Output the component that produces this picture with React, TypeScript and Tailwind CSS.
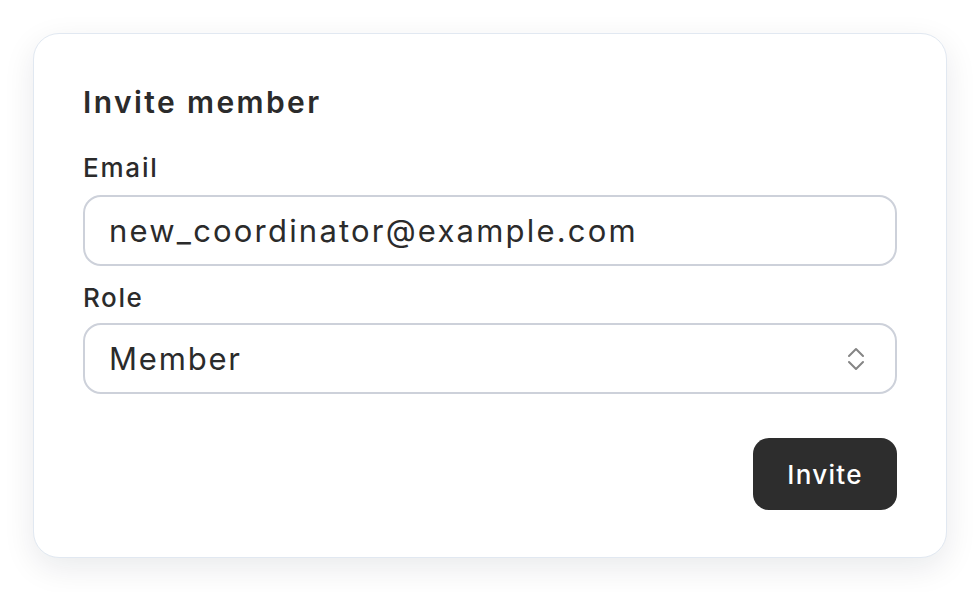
export default function App() {
  return (
    <div
      className="min-h-[592px] bg-white p-[33px] text-[#2b2b2b]"
      style={{ fontFamily: '"Inter", "Noto Sans", sans-serif' }}
    >
      <div className="flex flex-col rounded-[26px] border border-[#e1e8f1] bg-white px-[49px] pt-[48px] pb-[47px] shadow-[0_10px_32px_rgba(15,23,42,0.09)]">
        {/* Title */}
        <h2 className="text-[30px] font-semibold leading-[40px] tracking-[2.4px]">Invite member</h2>

        {/* Email */}
        <label className="mt-[31px] text-[26px] font-medium leading-[30px] tracking-[1.8px]">Email</label>
        <div className="mt-[12px] flex h-[71px] items-center rounded-[18px] border-2 border-[#cdd1da] px-[24px]">
          <span className="text-[31px] leading-none tracking-[2.2px]">new_coordinator@example.com</span>
        </div>

        {/* Role */}
        <label className="mt-[17px] text-[26px] font-medium leading-[30px] tracking-[1.6px]">Role</label>
        <div className="mt-[10px] flex h-[71px] items-center justify-between rounded-[18px] border-2 border-[#cdd1da] pl-[24px] pr-[31px]">
          <span className="text-[31px] leading-none tracking-[1.8px]">Member</span>
          <svg width="16" height="24" viewBox="0 0 16 24" fill="none" stroke="#858585" strokeWidth="2" strokeLinecap="round" strokeLinejoin="round">
            <path d="M1 9 L8 2 L15 9" />
            <path d="M1 15 L8 22 L15 15" />
          </svg>
        </div>

        {/* Action */}
        <div className="mt-[44px] flex justify-end">
          <button className="h-[72px] w-[144px] rounded-[16px] bg-[#2d2d2d] text-[26px] font-medium tracking-[1.3px] text-white">
            Invite
          </button>
        </div>
      </div>
    </div>
  );
}
